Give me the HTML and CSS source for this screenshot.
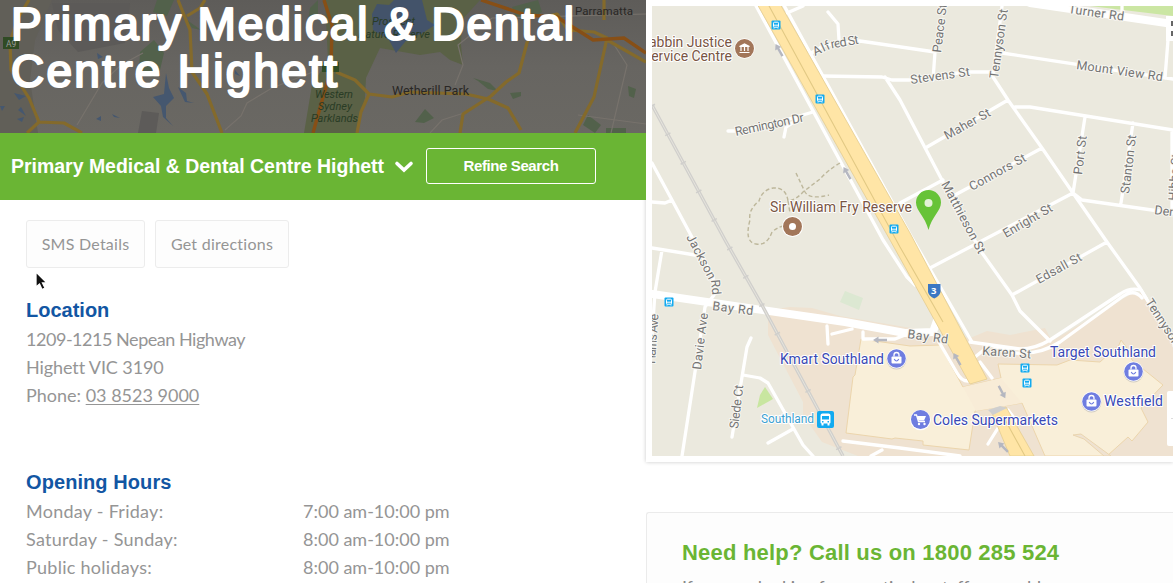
FILE: index.html
```html
<!DOCTYPE html>
<html lang="en">
<head>
<meta charset="utf-8">
<title>Primary Medical &amp; Dental Centre Highett</title>
<link rel="stylesheet" href="styles.css">
</head>
<body>
<div class="page">
<main class="main">
  <header class="hero">
    <svg class="hero-map" viewBox="0 0 646 133" aria-hidden="true">
      <defs><linearGradient id="shade" x1="0" y1="0" x2="0" y2="1"><stop offset="0" stop-color="#5e5c59"/><stop offset=".5" stop-color="#676561"/><stop offset="1" stop-color="#6a6863"/></linearGradient></defs>
      <rect width="646" height="133" fill="url(#shade)"/>
      <path d="M0 0H52L35 40 30 80 38 133H0z" fill="#615f58"/>
      <path d="M52 3H130L125 43 78 52 58 30z" fill="#5c5a58"/>
      <path d="M142 111l17 2-3 20h-18z" fill="#5d5b59"/>
      <path d="M325 0H480L462 20 461 45 463 65 450 60 440 52 420 55 380 48 366 78 365 98 357 133H304L312 85 328 60z" fill="#5a6146"/>
      <path d="M157 0h17l-7 16-14-4zM187 20l14 10-9-2zM310 8l8-8v16l-10 5zM140 52l14-12 10 13-4 17-7 7-14-6zM473 78l17 5 8 8-10-2-10-8zM510 93l11-1v4l-8 3zM415 122l10-13 9 9-10 5zM512 7l26-7 4 12-14 9-12-4zM588 115l-5 10 12 8 6-8zM628 86l8 3-2 9-5-2zM606 128h20v5h-20z" fill="#52614b"/>
      <path d="M377 4l12 1 5-5h28l5 20 8 5-14 9-12 3-13 16-7-13-16-10-1-16z" fill="#43536a"/>
      <path d="M166 73l3 15 5 10-8 8v12l7 8-10-9-2-11-8-9 11-3zM178 87l8 6 1 8 7 2-9-1zM96 119l5-3v5zM112 114l8 4-6-1zM14 93l12 3-7 4zM0 106h5l-3 5zM21 107l5 9-8-6zM17 119l7-2-2 5zM97 53l6 4-5 2zM235 70l5 6-5-2z" fill="#45576f"/>
      <g fill="none" stroke="#77726c" stroke-width="1.2"><path d="M77 125L102 83 121 65 143 53M225 130L241 116 247 103 272 88 318 70M430 133L442 120 464 113M455 85L463 65 458 45 492 18 646 14M578 115L646 124M611 133L627 65 613 43"/></g>
      <g fill="none" stroke="#846a2b" stroke-width="3.2" stroke-linejoin="round"><path d="M27 133L39 122 29 98 11 70 10 42 18 18 29 0M39 122L64 123 82 133M178 0L190 30 192 72 207 94 222 133M187 16L200 8 205 0M336 72L355 80 369 94 392 97 410 92 466 94 488 99 508 108 521 130M357 133L361 112 369 94M460 133L463 114 491 96 506 82 519 73 528 39M575 133L594 97 607 38 594 32 568 30 557 14 540 18M607 40L646 62M604 20V0"/></g>
      <path d="M313 133L331 69 332 25 324 0M481 0L526 15 557 17 593 40 624 38 646 53" fill="none" stroke="#874f16" stroke-width="3.4"/>
      <rect x="3" y="37" width="16" height="12" fill="#304b24"/><rect x="322" y="62" width="17" height="10" fill="#304b24"/>
      <g class="dark-label"><text x="6" y="46.500" font-size="8.500" fill="#999">A9</text><text x="575" y="15" font-size="11.500" textLength="58">Parramatta</text><text x="392" y="94.500" font-size="12.500" textLength="77">Wetherill Park</text></g>
      <g class="park-label"><text x="372" y="25" textLength="43">Prospect</text><text x="358" y="38" textLength="72">Nature Reserve</text><text x="315" y="98" textLength="38">Western</text><text x="318" y="110" textLength="34">Sydney</text><text x="311" y="122" textLength="47">Parklands</text></g>
    </svg>
    <h1 class="hero-title"><svg class="title-art" viewBox="0 0 646 133"><text x="11" y="40" textLength="563">Primary Medical &amp; Dental</text><text x="11" y="86.500" textLength="326">Centre Highett</text></svg></h1>
  </header>
  <div class="search-bar">
    <span class="centre-name">Primary Medical &amp; Dental Centre Highett</span>
    <svg class="chevron" viewBox="0 0 20 14"><path d="M3 3.500l7 6.500 7-6.500" fill="none" stroke="#fff" stroke-width="3.600" stroke-linecap="round"/></svg>
    <a class="refine">Refine Search</a>
  </div>
  <div class="details">
    <div class="actions"><a class="action sms">SMS Details</a><a class="action directions">Get directions</a></div>
    <section class="location"><h2>Location</h2>
      <p><span class="l1">1209-1215 Nepean Highway</span></p><p><span class="l2">Highett VIC 3190</span></p><p><span class="l3">Phone: <a class="phone">03 8523 9000</a></span></p>
    </section>
    <section class="hours"><h2 class="hours-title">Opening Hours</h2>
      <dl><dt>Monday - Friday:</dt><dd>7:00 am-10:00 pm</dd><dt>Saturday - Sunday:</dt><dd>8:00 am-10:00 pm</dd><dt>Public holidays:</dt><dd>8:00 am-10:00 pm</dd></dl>
    </section>
  </div>
  <svg class="cursor" viewBox="0 0 14 20"><path d="M1 1v15l3.500-3 2.500 5.500 3-1.500-2.500-5H12z" fill="#111" stroke="#fff" stroke-width="1.300"/></svg>
</main>
<aside class="side">
  <div class="map-frame">
  <svg class="map" viewBox="652 6 521 450">
    <defs>
      <g id="bus"><rect x="-4.500" y="-4.500" width="9" height="9" rx="1" fill="#12aaf0"/><rect x="-2.500" y="-2.800" width="5" height="5" rx="1" fill="none" stroke="#fff"/><path d="M-2.500 .200h5M-2 2.300v1.200M2 2.300v1.200" stroke="#fff"/></g>
      <g id="bag"><circle cy="1" r="10" fill="#aaa" opacity=".5"/><circle r="10" fill="#fff"/><circle r="9.300" fill="#6f7de0"/><rect x="-5" y="-2" width="10" height="7" rx="1" fill="#fff"/><path d="M-2.500-2v-1.500a2.500 2.500 0 0 1 5 0V-2" fill="none" stroke="#fff" stroke-width="1.300"/><path d="M-2.300 .500q2.300 4 4.600 0" fill="none" stroke="#6f7de0" stroke-width="1.200"/></g>
      <path id="arrow" d="M0-7l3.500 5.500H1.200V7h-2.400v-8.500H-3.500z" fill="#b5b7c0"/>
    </defs>
    <rect x="652" y="6" width="521" height="450" fill="#ebe9de"/>
    <path d="M1090 6H1173V16z" fill="#cbe6a3"/>
    <path d="M845 291l18 7-4 12-19-8z" fill="#dce8d2"/><path d="M765 387l8 12-16 9 3-13z" fill="#c8e6a0"/>
    <path d="M768 310L790 307 812 308 840 316 970 338 987 331 1010 335 1045 328 1052 341 1133 293 1141 293 1173 345V456H858L822 442 803 415V402L768 335z" fill="#efe2d1"/>
    <path d="M861 339L910 346 940 345 963 387 1001 378 998 364 1057 365 1070 360 1100 362 1119 345 1121 340 1127 348 1132 360 1163 385 1141 408 1148 422 1132 441 1128 437 1107 456H1045L1022 403 975 411 969 450 923 445V441L895 438 892 439 846 433 853 377 855 375z" fill="#f9efd9" stroke="#ecd5ac"/>
    <path d="M1073 435l8-1 30 22h-7l-20-17z" fill="#efe2d1" stroke="#ead5b0"/>
    <g class="road"><path d="M652 163L672 200 694 241 713 277 714 295 705 307 682 456M652 202L665 203 672 200M652 248L695 255M662 250L655 292 650 365M751 338L747 347 732 437M743 375L760 378 768 383 803 445 813 456M768 443L793 429M728 131H740L765 126 813 112M784 137L786 127 797 120M787 13L803 6M808 55L825 45 860 41 935 52 933 80M828 12L838 24 839 40M822 76L882 77 892 80H910L965 72H993M885 77L900 100 943 182 980 250 1012 295 1020 311 1050 341M1002 6L993 77 1008 100 1042 148 1073 193 1107 242 1140 288 1173 343M927 147L1008 100M900 203L943 180M955 195L1042 148M930 268L1073 193M1012 295L1107 242M1002 53L1173 79M1168 40L1165 78M1015 107H1030L1173 130M1085 117L1073 193M1133 123L1121 203M1073 193L1082 200 1173 213M1172 130V213M1122 6V15M827 326L828 344M832 334L852 329M863 332V339H895L905 335"/>
    <path class="wide" d="M652 294L845 322 905 333 933 332 940 312M1030 3L1173 24"/><path d="M970 342L1020 349Q1035 349 1050 340L1120 294Q1130 287 1141 290L1146 298M975 357L990 345 1015 353Q1040 355 1060 342L1122 297Q1134 288 1142 298"/></g>
    <path d="M652 105L725 240 763 307 843 456" fill="none" stroke="#d0cfcc" stroke-width="3.400"/><path d="M652 105L725 240 763 307 843 456" fill="none" stroke="#e6e4dc" stroke-width="1"/><path d="M652 105L725 240 763 307 843 456" fill="none" stroke="#d0cfcc" stroke-width="6" stroke-dasharray="1.500 31"/>
    <path class="front" d="M754 2L883 240 907 277 915 285M781 0L912 238 972 342M939 342L957 373Q963 384 973 380M980 362L992 378M843 441L900 448 960 456M871 456L882 450M988 444L998 428M1008 410L1017 422"/>
    <path d="M756 2H779L910 233 987 379 970 384 890 240zM992 413L1006 407 1034 456H1010z" fill="#ffe5a6" stroke="#e6cf94" stroke-width=".9"/>
    <path d="M768 4L850 155 900 247 943 322M1003 416L1025 456" fill="none" stroke="#e2c984" stroke-width="1.100"/>
    <path d="M963 387L1001 378 1022 403 976 411z" fill="#f8ecd7"/><path d="M988 410l12-4 7 2-14 7z" fill="#cfcfcf"/>
    <path d="M796 173L805 192Q810 200 829 195M840 163Q828 170 820 179L803 192Q796 200 788 201Q786 187 773 188Q762 190 759 201Q748 210 750 220Q744 242 756 244Q767 246 772 232Q780 225 787 226M788 201L790 213" fill="none" stroke="#bdb79b" stroke-width="1.400" stroke-dasharray="4 2.500"/>
    <use href="#arrow" transform="translate(779 50) rotate(-30)"/><use href="#arrow" transform="translate(847 173) rotate(-30)"/><use href="#arrow" transform="translate(957 359) rotate(-30)"/><use href="#arrow" transform="translate(1002 392) rotate(152)"/><use href="#arrow" transform="translate(1003 447) rotate(-45)"/><use href="#arrow" transform="translate(880 340) rotate(-90)"/>
    <g class="street">
      <text transform="translate(815 56) rotate(-25)" textLength="18">Alf</text><text transform="translate(831.500 48.500) rotate(-10)" textLength="28">red St</text>
      <text transform="translate(941 53) rotate(-83)" textLength="49">Peace St</text><text transform="translate(998 79) rotate(-82)" textLength="70">Tennyson St</text>
      <text transform="translate(1068 13) rotate(8)" textLength="56">Turner Rd</text><text transform="translate(1076 69) rotate(8)" textLength="87">Mount View Rd</text>
      <text transform="translate(911 84) rotate(-8)" textLength="60">Stevens St</text><text transform="translate(947 140) rotate(-29)" textLength="51">Maher St</text><text transform="translate(972 191) rotate(-29)" textLength="63">Connors St</text><text transform="translate(1006 238) rotate(-30)" textLength="55">Enright St</text><text transform="translate(1039 284) rotate(-29)" textLength="50">Edsall St</text>
      <text transform="translate(941 184) rotate(62)" textLength="80">Matthieson St</text><text transform="translate(1082 175) rotate(-83)" textLength="39">Port St</text><text transform="translate(1129 194) rotate(-83)" textLength="59">Stanton St</text><text transform="translate(1177 201) rotate(-86)">Hibbs St</text><text transform="translate(1154 214) rotate(7)">Denbigh</text>
      <text transform="translate(736 136) rotate(-12)" textLength="70">Remington Dr</text>
      <text transform="translate(686 237) rotate(62)" textLength="49">Jackson</text><text transform="translate(711 280) rotate(85)" textLength="15">Rd</text><text transform="translate(712 310) rotate(7)" textLength="41">Bay Rd</text><text transform="translate(907 338) rotate(8)" textLength="41">Bay Rd</text>
      <text transform="translate(701 370) rotate(-83)" textLength="57">Davie Ave</text><text transform="translate(655 364) rotate(-86)" textLength="50">Harris Ave</text><text transform="translate(738 429) rotate(-83)" textLength="44">Siede Ct</text><text transform="translate(982 355) rotate(4)" textLength="49">Karen St</text><text transform="translate(1145 302) rotate(57)">Tennyson St</text>
    </g>
    <g class="place"><text x="644.500" y="47" textLength="87.500">rabbin Justice</text><text x="643" y="61" textLength="89">Service Centre</text><text x="770" y="212" textLength="142">Sir William Fry Reserve</text></g>
    <g class="shop"><text x="780" y="364" textLength="104">Kmart Southland</text><text x="933" y="425" textLength="125">Coles Supermarkets</text><text x="1050" y="357" textLength="106">Target Southland</text><text x="1104" y="406" textLength="59">Westfield</text></g>
    <text class="station" x="761" y="423" textLength="53">Southland</text>
    <g><circle cx="744.500" cy="48.500" r="10.200" fill="#fff"/><circle cx="744.500" cy="48.500" r="9.500" fill="#a27659"/><path d="M739.500 46.500l5-2.500 5 2.500zM739.500 52.500h10M741 47v4M744.500 47v4M748 47v4" fill="#fff" stroke="#fff" stroke-width="1.200"/><circle cx="792.500" cy="226.500" r="10.500" fill="#fff"/><circle cx="792.500" cy="226.500" r="9.500" fill="#a27659"/><circle cx="792.500" cy="226.500" r="3.500" fill="#fff"/></g>
    <use href="#bus" x="776" y="25"/><use href="#bus" x="820" y="99"/><use href="#bus" x="894" y="229"/><use href="#bus" x="669" y="302"/><use href="#bus" x="1025" y="368"/><use href="#bus" x="1027" y="383"/>
    <g transform="translate(825.500 419.500)"><rect x="-8.500" y="-8.500" width="17" height="17" rx="2" fill="#12aaf0"/><path fill-rule="evenodd" d="M-5-4q0-2 2-2h6q2 0 2 2v7q0 1-1 1v2h-2v-2h-4v2h-2v-2q-1 0-1-1zM-3.500-3.500v3.500h7v-3.500zM-3.500 1.500v1.500h1.500v-1.500zM2 1.500v1.500h1.500v-1.500z" fill="#fff"/></g>
    <use href="#bag" x="896.500" y="358.500"/><use href="#bag" x="1133.500" y="371.500"/><use href="#bag" x="1091.500" y="401.500"/>
    <circle cx="920.500" cy="420" r="10.300" fill="#fff"/><circle cx="920.500" cy="419.500" r="9.500" fill="#6f7de0"/><path d="M914 415h2.500l2 6.500h6.500" fill="none" stroke="#fff" stroke-width="1.300"/><path d="M917 416h9l-2 4.500h-5.500z" fill="#fff"/><circle cx="919" cy="424" r="1.200" fill="#fff"/><circle cx="924.500" cy="424" r="1.200" fill="#fff"/>
    <path d="M928 284h12.500v8q-1 4-6.300 6.500-5.200-2.500-6.200-6.500z" fill="#3c78c3"/><text x="931" y="294" font-family="Open Sans,sans-serif" font-size="9.500" font-weight="700" fill="#fff">3</text>
    <path d="M928.500 230C925 216 916 211 916 202.500a12.500 12.500 0 0 1 25 0C941 211 932 216 928.500 230z" fill="#67c338"/><circle cx="928.500" cy="203" r="4" fill="#e4f2d8"/>
    <g><rect x="1166" y="16" width="12" height="25" fill="#fff"/><path d="M1171 21h4v5h-4zM1171 31h4v5h-4z" fill="#666"/><rect x="1167" y="391" width="12" height="55" rx="2" fill="#fff"/><path d="M1171 418.500h2" stroke="#ddd"/></g>
  </svg>
  </div>
  <div class="help"><h2>Need help? Call us on 1800 285 524</h2><p>If you are looking for a particular staff or would</p></div>
</aside>
</div>
</body>
</html>
```
FILE: styles.css
```css
* { box-sizing: border-box; }
body { margin: 0; background: #fff; overflow: hidden; font-family: Lato, sans-serif; color: #959595; }
h1, h2, p, dl, dd { margin: 0; }
.page { display: flex; width: 1173px; height: 583px; overflow: hidden; }
.main { position: relative; width: 646px; flex: none; }
.hero { display: grid; height: 133px; overflow: hidden; }
.hero > * { grid-area: 1 / 1; }
.hero-map, .title-art { display: block; width: 646px; height: 133px; }
.hero-title { line-height: 0; position: relative; }
.title-art text { font: 400 46px "Liberation Sans", sans-serif; fill: #fff; stroke: #fff; stroke-width: 2.2px; stroke-linejoin: round; }
.dark-label { font-family: Roboto, sans-serif; fill: #292725; }
.park-label { font: italic 11px Roboto, sans-serif; fill: #293c25; }
.search-bar { height: 67px; background: #6ab534; color: #fff; display: flex; align-items: center; padding-left: 11px; font-family: "Liberation Sans", sans-serif; font-weight: 700; white-space: nowrap; }
.centre-name { width: 373px; font-size: 19.5px; letter-spacing: -.02px; padding-bottom: 1px; }
.chevron { width: 20px; height: 14px; margin: 0 12px 0 10px; flex: none; }
.refine { width: 170px; height: 36px; flex: none; border: 1px solid #fff; border-radius: 3px; line-height: 34px; text-align: center; font-size: 15px; letter-spacing: -.4px; margin-bottom: 1px; }
.details { padding: 20px 26px 0; }
.actions { display: flex; gap: 10px; }
.action { height: 48px; border: 1px solid #ececec; border-radius: 3px; background: #fdfdfd; font-size: 16px; line-height: 45px; letter-spacing: .25px; text-align: center; white-space: nowrap; }
.sms { width: 119px; }
.directions { width: 134px; }
h2 { font: 700 20px/28px "Liberation Sans", sans-serif; color: #1256a3; white-space: nowrap; }
.location { padding-top: 28px; }
.location p { line-height: 28px; font-size: 18px; white-space: nowrap; }
.l1 { letter-spacing: -.47px; }
.l2 { letter-spacing: -.1px; }
.location h2, .hours h2 { padding-bottom: 1px; }
.hours-title { letter-spacing: .08px; }
.phone { text-decoration: underline; text-decoration-thickness: 1px; text-underline-offset: 2px; }
.hours { padding-top: 59px; }
dl { display: grid; grid-template-columns: 277px 1fr; font-size: 18px; line-height: 28px; }
dt { letter-spacing: .27px; }
.cursor { position: absolute; left: 35px; top: 271px; width: 14px; height: 20px; }
.side { flex: 1; min-width: 0; }
.map-frame { height: 462px; padding: 6px 0 6px 6px; box-shadow: 0 0 4px rgba(0,0,0,.22); overflow: hidden; background: #fff; }
.map { display: block; width: 521px; height: 450px; }
.road, .front { fill: none; stroke: #fff; stroke-width: 3.3px; stroke-linejoin: round; stroke-linecap: round; }
.wide { stroke-width: 8px; }
.street, .place, .shop, .station { font-family: Roboto, sans-serif; paint-order: stroke; stroke: #fff; stroke-width: 2px; stroke-linejoin: round; }
.street { font-size: 12.5px; fill: #747474; stroke: #f8f7f2; }
.place { font-size: 14px; fill: #795544; }
.shop { font-size: 14px; fill: #3949b5; }
.station { font-size: 12px; fill: #3b9fd2; }
.help { margin-top: 50px; height: 100px; border: 1px solid #ebebeb; border-right: 0; border-radius: 3px 0 0 0; background: #fdfdfd; padding: 26px 0 0 35px; }
.help h2 { color: #6ab534; font-size: 22px; letter-spacing: .2px; }
.help p { font-size: 18px; line-height: 28px; margin-top: 6px; letter-spacing: -.2px; color: #888; white-space: nowrap; }
```
